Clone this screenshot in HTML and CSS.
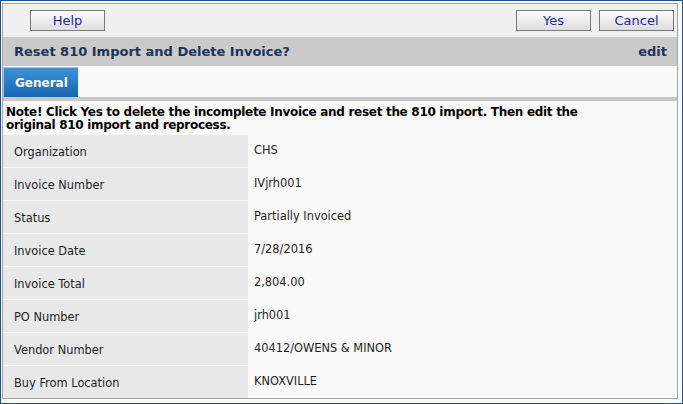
FILE: index.html
```html
<!DOCTYPE html>
<html>
<head>
<meta charset="utf-8">
<link rel="stylesheet" href="styles.css">
</head>
<body>
<div class="window">
  <div class="panel">
    <div class="toolbar">
      <button class="btn">Help</button>
      <div class="toolbar-right">
        <button class="btn">Yes</button>
        <button class="btn">Cancel</button>
      </div>
    </div>
    <div class="header">
      <span class="title">Reset 810 Import and Delete Invoice?</span>
      <span class="edit">edit</span>
    </div>
    <div class="tabs">
      <div class="tab">General</div>
    </div>
    <div class="strip"></div>
    <div class="note">Note! Click Yes to delete the incomplete Invoice and reset the 810 import. Then edit the original 810 import and reprocess.</div>
    <div class="grid">
      <div class="label">Organization</div><div class="value">CHS</div>
      <div class="label">Invoice Number</div><div class="value">IVjrh001</div>
      <div class="label">Status</div><div class="value">Partially Invoiced</div>
      <div class="label">Invoice Date</div><div class="value">7/28/2016</div>
      <div class="label">Invoice Total</div><div class="value">2,804.00</div>
      <div class="label">PO Number</div><div class="value">jrh001</div>
      <div class="label">Vendor Number</div><div class="value">40412/OWENS &amp; MINOR</div>
      <div class="label">Buy From Location</div><div class="value">KNOXVILLE</div>
    </div>
  </div>
</div>
</body>
</html>
```
FILE: styles.css
```css
html, body {
  margin: 0;
  padding: 0;
  background: #fafafa;
}
body {
  font-family: "DejaVu Sans", Verdana, sans-serif;
  font-size: 12px;
  color: #1a1a1a;
}
.window {
  width: 683px;
  height: 404px;
  box-sizing: border-box;
  border: 1px solid #1d4f8f;
  padding: 2px 4px 4px 1px;
  background: #fbfbfb;
}
.panel {
  height: 100%;
  box-sizing: border-box;
  border: 1px solid #a3a3a3;
  display: flex;
  flex-direction: column;
  background: #f9f9f9;
}
.toolbar {
  height: 33px;
  box-sizing: border-box;
  background: #f0f0f0;
  display: flex;
  justify-content: space-between;
  align-items: flex-start;
  padding: 6px 3px 0 27px;
}
.toolbar-right {
  display: flex;
  gap: 8px;
}
.btn {
  width: 75px;
  height: 21px;
  box-sizing: border-box;
  border: 1px solid #7a7a7a;
  background: linear-gradient(#fbfbfb, #dedede);
  color: #2a1fa0;
  font-family: "DejaVu Sans", Verdana, sans-serif;
  font-size: 13px;
  padding: 0;
  line-height: 19px;
}
.header {
  height: 29px;
  box-sizing: border-box;
  background: #c9cac9;
  display: flex;
  justify-content: space-between;
  align-items: center;
  padding: 0 10px 0 11px;
  font-weight: bold;
  font-size: 13px;
  color: #1c3559;
}
.tabs {
  height: 31px;
  box-sizing: border-box;
  padding-top: 1px;
  background: #fafafa;
  display: flex;
}
.tab {
  width: 75px;
  box-sizing: border-box;
  border-top: 1px solid #9ec3e6;
  border-left: 1px solid #9ec3e6;
  background: linear-gradient(#3f91d6, #1466b2);
  color: #ffffff;
  font-weight: bold;
  font-size: 12px;
  display: flex;
  align-items: center;
  padding-left: 11px;
}
.strip {
  height: 4px;
  background: #c8c8c8;
}
.note {
  height: 34px;
  box-sizing: border-box;
  padding: 5px 0 0 3px;
  width: 595px;
  font-weight: bold;
  font-size: 12px;
  letter-spacing: -0.3px;
  line-height: 13px;
  color: #000;
}
.grid {
  flex: 1;
  display: grid;
  grid-template-columns: 245px 1fr;
  grid-auto-rows: 32px;
  row-gap: 1px;
  column-gap: 1px;
  background: #f9f9f9;
}
.label {
  background: #e8e8e8;
  display: flex;
  align-items: center;
  padding: 2px 0 0 11px;
  font-size: 11.4px;
  color: #1e1e1e;
}
.value {
  background: #f9f9f9;
  display: flex;
  align-items: center;
  padding: 0 0 2px 5px;
  font-size: 11.4px;
  color: #1e1e1e;
}
```
